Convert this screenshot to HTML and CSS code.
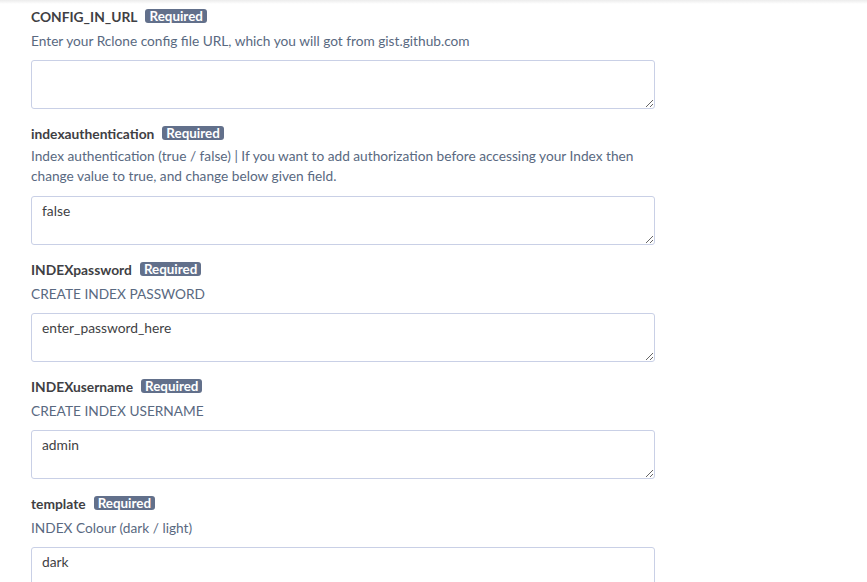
FILE: index.html
```html
<!DOCTYPE html>
<html>
<head>
<meta charset="utf-8">
<link rel="stylesheet" href="styles.css">
</head>
<body>
<div class="topshadow"></div>
<div class="form">
  <div class="field">
    <div class="label-row"><span class="name">CONFIG_IN_URL</span><span class="badge">Required</span></div>
    <p class="desc">Enter your Rclone config file URL, which you will got from gist.github.com</p>
    <textarea class="input"></textarea>
  </div>
  <div class="field">
    <div class="label-row"><span class="name">indexauthentication</span><span class="badge">Required</span></div>
    <p class="desc desc-wrap">Index authentication (true / false) | If you want to add authorization before accessing your Index then change value to true, and change below given field.</p>
    <textarea class="input">false</textarea>
  </div>
  <div class="field">
    <div class="label-row"><span class="name">INDEXpassword</span><span class="badge">Required</span></div>
    <p class="desc">CREATE INDEX PASSWORD</p>
    <textarea class="input">enter_password_here</textarea>
  </div>
  <div class="field">
    <div class="label-row"><span class="name">INDEXusername</span><span class="badge">Required</span></div>
    <p class="desc">CREATE INDEX USERNAME</p>
    <textarea class="input">admin</textarea>
  </div>
  <div class="field">
    <div class="label-row"><span class="name">template</span><span class="badge">Required</span></div>
    <p class="desc">INDEX Colour (dark / light)</p>
    <textarea class="input">dark</textarea>
  </div>
</div>
</body>
</html>
```
FILE: styles.css
```css
html, body {
  margin: 0;
  padding: 0;
  background: #fff;
  overflow: hidden;
  height: 582px;
}
body {
  font-family: Lato, "Open Sans", sans-serif;
  color: #3f3f44;
}
.topshadow {
  height: 4px;
  background: linear-gradient(#ececec, #fff);
}
.form {
  padding: 5px 0 0 31px;
  width: 624px;
}
.field {
  margin-bottom: 17px;
}
.label-row {
  display: flex;
  align-items: center;
  gap: 8px;
  height: 14px;
}
.name {
  font-size: 13.8px;
  font-weight: 700;
  color: #3f3f44;
}
.badge {
  background: #62708b;
  color: #fff;
  font-size: 13.4px;
  font-weight: 700;
  border-radius: 3px;
  padding: 0 4px;
  height: 14px;
  line-height: 14px;
}
.desc {
  margin: 8px 0 0;
  font-size: 13.7px;
  line-height: 20px;
  color: #596981;
}
.desc-wrap {
  margin-top: 6px;
}
.input {
  display: block;
  box-sizing: border-box;
  width: 624px;
  height: 49px;
  margin-top: 9px;
  border: 1px solid #c9d0e6;
  border-radius: 3px;
  padding: 5px 10px;
  font-family: Lato, "Open Sans", sans-serif;
  font-size: 13.8px;
  line-height: 18px;
  color: #3f3f44;
  resize: vertical;
  outline: none;
}
.desc-wrap + .input {
  margin-top: 10px;
}
```
